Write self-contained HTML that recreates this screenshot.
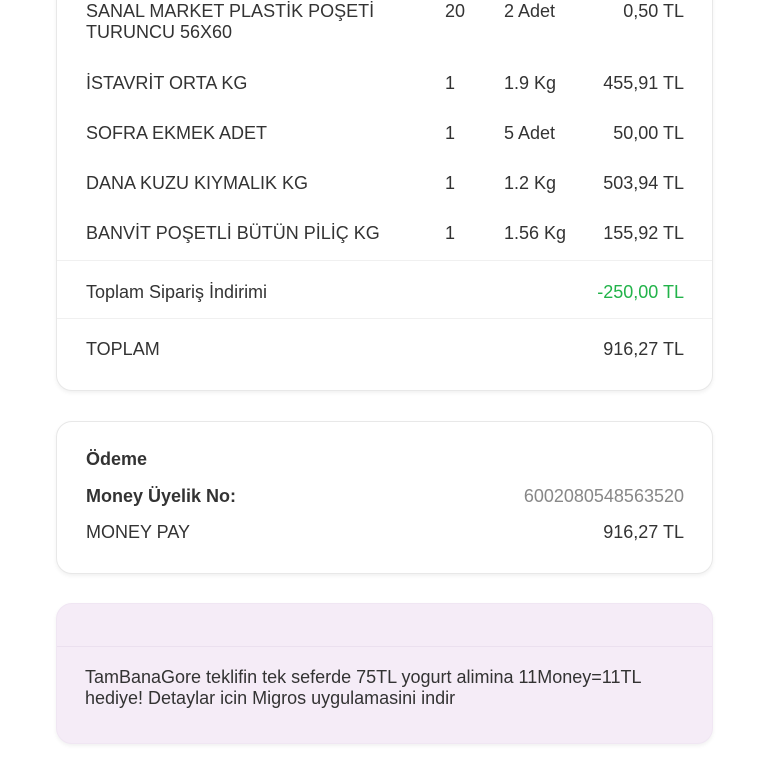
<!DOCTYPE html>
<html><head><meta charset="utf-8"><style>
body{margin:0;width:768px;height:768px;background:#fff;font-family:"Liberation Sans",sans-serif;color:#333;font-size:18px;position:relative;overflow:hidden}
.card{position:absolute;left:56px;width:655px;border:1px solid #e8e8e8;border-radius:16px;box-shadow:0 2px 4px rgba(0,0,0,.06);background:#fff}
.t{position:absolute;white-space:nowrap;line-height:21px}
.r{text-align:right;right:84px}
.line{position:absolute;left:57px;width:655px;height:1px;background:#f0f0f0}
b{font-weight:bold}
</style></head><body>
<div class="card" style="top:-40px;height:429px"></div>
<div class="line" style="top:260px"></div>
<div class="line" style="top:318px"></div>
<div class="t" style="left:86px;top:1px">SANAL MARKET PLASTİK POŞETİ<br>TURUNCU 56X60</div>
<div class="t" style="left:445px;top:1px">20</div><div class="t" style="left:504px;top:1px">2 Adet</div><div class="t r" style="top:1px">0,50 TL</div>
<div class="t" style="left:86px;top:73px">İSTAVRİT ORTA KG</div><div class="t" style="left:445px;top:73px">1</div><div class="t" style="left:504px;top:73px">1.9 Kg</div><div class="t r" style="top:73px">455,91 TL</div>
<div class="t" style="left:86px;top:123px">SOFRA EKMEK ADET</div><div class="t" style="left:445px;top:123px">1</div><div class="t" style="left:504px;top:123px">5 Adet</div><div class="t r" style="top:123px">50,00 TL</div>
<div class="t" style="left:86px;top:173px">DANA KUZU KIYMALIK KG</div><div class="t" style="left:445px;top:173px">1</div><div class="t" style="left:504px;top:173px">1.2 Kg</div><div class="t r" style="top:173px">503,94 TL</div>
<div class="t" style="left:86px;top:223px">BANVİT POŞETLİ BÜTÜN PİLİÇ KG</div><div class="t" style="left:445px;top:223px">1</div><div class="t" style="left:504px;top:223px">1.56 Kg</div><div class="t r" style="top:223px">155,92 TL</div>
<div class="t" style="left:86px;top:282px">Toplam Sipariş İndirimi</div><div class="t r" style="top:282px;color:#22b34a">-250,00 TL</div>
<div class="t" style="left:86px;top:339px">TOPLAM</div><div class="t r" style="top:339px">916,27 TL</div>

<div class="card" style="top:421px;height:151px"></div>
<div class="t" style="left:86px;top:449px"><b>Ödeme</b></div>
<div class="t" style="left:86px;top:486px"><b>Money Üyelik No:</b></div><div class="t r" style="top:486px;color:#888">6002080548563520</div>
<div class="t" style="left:86px;top:522px">MONEY PAY</div><div class="t r" style="top:522px">916,27 TL</div>

<div class="card" style="top:603px;height:139px;background:#f5ecf7;border-color:#f0e6f3"></div>
<div class="line" style="top:646px;background:#ebe0ef"></div>
<div class="t" style="left:85px;top:667px">TamBanaGore teklifin tek seferde 75TL yogurt alimina 11Money=11TL<br>hediye! Detaylar icin Migros uygulamasini indir</div>
</body></html>
